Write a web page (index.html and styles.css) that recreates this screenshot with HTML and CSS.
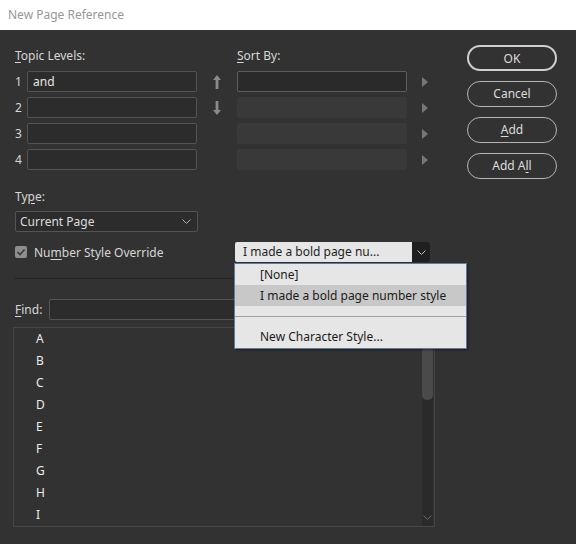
FILE: index.html
```html
<!DOCTYPE html>
<html>
<head>
<meta charset="utf-8">
<link rel="stylesheet" href="styles.css">
</head>
<body>
<div class="titlebar">New Page Reference</div>
<div class="content">
  <div class="left">
    <div class="levels">
      <div class="hdr span2"><u>T</u>opic Levels:</div>
      <div class="hdr col4"><u>S</u>ort By:</div>

      <div class="num">1</div>
      <div class="field"><span class="ftext">and</span></div>
      <div class="arrow"><svg width="8" height="14" viewBox="0 0 8 14"><polygon points="0,5 4,0 8,5" fill="#8a8a8a"/><rect x="2.6" y="4" width="2.8" height="10" fill="#8a8a8a"/></svg></div>
      <div class="field active"></div>
      <div class="tri-cell"><span class="tri"></span></div>

      <div class="num">2</div>
      <div class="field"></div>
      <div class="arrow"><svg width="8" height="14" viewBox="0 0 8 14"><polygon points="0,9 4,14 8,9" fill="#8a8a8a"/><rect x="2.6" y="0" width="2.8" height="10" fill="#8a8a8a"/></svg></div>
      <div class="field disabled"></div>
      <div class="tri-cell"><span class="tri"></span></div>

      <div class="num">3</div>
      <div class="field"></div>
      <div class="arrow"></div>
      <div class="field disabled"></div>
      <div class="tri-cell"><span class="tri"></span></div>

      <div class="num">4</div>
      <div class="field"></div>
      <div class="arrow"></div>
      <div class="field disabled"></div>
      <div class="tri-cell"><span class="tri"></span></div>
    </div>

    <div class="type-label">Ty<u>p</u>e:</div>
    <div class="type-select">
      <span>Current Page</span>
      <svg class="chev" width="9" height="5" viewBox="0 0 9 5"><polyline points="0.5,0.5 4.5,4.5 8.5,0.5" fill="none" stroke="#b0b0b0" stroke-width="1"/></svg>
    </div>

    <div class="check-row">
      <span class="checkbox"><svg width="12" height="12" viewBox="0 0 12 12"><polyline points="2.5,6 5,8.5 9.5,3.5" fill="none" stroke="#3a3a3a" stroke-width="1.6"/></svg></span>
      <span class="check-label">Nu<u>m</u>ber Style Override</span>
      <div class="style-select">
        <div class="ss-value">I made a bold page nu...</div>
        <div class="ss-btn"><svg width="9" height="5" viewBox="0 0 9 5"><polyline points="0.5,0.5 4.5,4.5 8.5,0.5" fill="none" stroke="#bdbdbd" stroke-width="1"/></svg></div>
        <div class="popup">
          <div class="pitem">[None]</div>
          <div class="pitem hl">I made a bold page number style</div>
          <div class="pblank"></div>
          <div class="psep"></div>
          <div class="pitem">New Character Style...</div>
        </div>
      </div>
    </div>

    <div class="divider"></div>

    <div class="find-row">
      <span class="find-label"><u>F</u>ind:</span>
      <div class="find-field"></div>
    </div>

    <div class="list">
      <div class="items">
        <div class="item">A</div>
        <div class="item">B</div>
        <div class="item">C</div>
        <div class="item">D</div>
        <div class="item">E</div>
        <div class="item">F</div>
        <div class="item">G</div>
        <div class="item">H</div>
        <div class="item">I</div>
      </div>
      <div class="scrollbar">
        <div class="thumb"></div>
        <svg class="sb-chev" width="9" height="5" viewBox="0 0 9 5"><polyline points="0.5,0.5 4.5,4.5 8.5,0.5" fill="none" stroke="#6a6a6a" stroke-width="1"/></svg>
      </div>
    </div>
  </div>

  <div class="buttons">
    <div class="btn ok">OK</div>
    <div class="btn">Cancel</div>
    <div class="btn"><u>A</u>dd</div>
    <div class="btn">Add A<u>l</u>l</div>
  </div>
</div>
</body>
</html>
```

FILE: styles.css
```css
* { box-sizing: border-box; }
html, body { margin: 0; padding: 0; }
body {
  width: 576px;
  height: 544px;
  background: #323232;
  font-family: "Noto Sans", "Open Sans", sans-serif;
  font-size: 12px;
  color: #d6d6d6;
  overflow: hidden;
}
u { text-decoration: underline; text-underline-offset: 2px; }

.titlebar {
  height: 30px;
  background: #ffffff;
  color: #979797;
  line-height: 30px;
  padding-left: 8px;
}

.content {
  display: flex;
  padding-top: 15px;
}

.left {
  width: 420px;
  margin-left: 15px;
}

.levels {
  display: grid;
  grid-template-columns: 12px 170px 40px 170px 28px;
  grid-template-rows: repeat(5, 21px);
  row-gap: 5px;
}
.hdr { line-height: 22px; }
.span2 { grid-column: 1 / 3; }
.col4 { grid-column: 4 / 5; }
.num { grid-column: 1; line-height: 21px; }
.field {
  height: 21px;
  background: #2c2c2c;
  border: 1px solid #535353;
  border-radius: 2px;
  padding-left: 5px;
  line-height: 19px;
  color: #e6e6e6;
}
.field.active { background: #2a2a2a; border-color: #5c5c5c; }
.field.disabled { background: #393939; border-color: #393939; }
.arrow {
  display: flex;
  align-items: center;
  justify-content: center;
  padding-right: 1px;
}
.arrow svg { display: block; }
.tri-cell {
  display: flex;
  align-items: center;
  padding-left: 15px;
}
.tri {
  width: 0; height: 0;
  border-left: 6px solid #777777;
  border-top: 5px solid transparent;
  border-bottom: 5px solid transparent;
}

.type-label {
  margin-top: 18px;
  line-height: 18px;
}
.type-select {
  margin-top: 5px;
  width: 183px;
  height: 21px;
  background: #2c2c2c;
  border: 1px solid #545454;
  border-radius: 2px;
  display: flex;
  align-items: center;
  justify-content: space-between;
  padding: 0 6px 0 4px;
  color: #dcdcdc;
}
.chev { display: block; }

.check-row {
  margin-top: 10px;
  height: 20px;
  display: flex;
  align-items: center;
}
.checkbox {
  width: 12px; height: 12px;
  background: #8e8e8e;
  border-radius: 2px;
  display: block;
}
.checkbox svg { display: block; }
.check-label { margin-left: 7px; }

.style-select {
  position: relative;
  margin-left: auto;
  margin-right: 5px;
  width: 195px;
  height: 20px;
  display: flex;
}
.ss-value {
  flex: 1;
  background: #e6e6e6;
  color: #1e1e1e;
  line-height: 20px;
  padding-left: 8px;
  border-radius: 2px 0 0 2px;
}
.ss-btn {
  width: 18px;
  background: #1f1f1f;
  border-radius: 0 3px 3px 0;
  display: flex;
  align-items: center;
  justify-content: center;
}
.ss-btn svg { display: block; }

.popup {
  position: absolute;
  left: -1px;
  top: 21px;
  width: 233px;
  height: 86px;
  background: #e6e6e6;
  border: 1px solid #5b7ca3;
  box-shadow: 1px 1px 2px rgba(0,0,0,0.45);
  color: #1c1c1c;
  padding-top: 1px;
  z-index: 5;
}
.pitem {
  height: 20px;
  line-height: 20px;
  padding-left: 25px;
}
.pitem.hl { background: #c8c8c8; height: 21px; line-height: 21px; }
.pblank { height: 10px; }
.psep { height: 1px; background: #a0a0a0; margin: 0 0 10px 0; }

.divider {
  margin-top: 16px;
  margin-left: -1px;
  height: 1px;
  background: #262626;
}

.find-row {
  margin-top: 20px;
  display: flex;
  align-items: center;
  height: 21px;
}
.find-label { width: 34px; }
.find-field {
  flex: 1;
  height: 21px;
  background: #2c2c2c;
  border: 1px solid #545454;
  border-radius: 2px;
}

.list {
  margin-top: 7px;
  margin-left: -2px;
  width: 422px;
  height: 200px;
  border: 1px solid #464646;
  display: flex;
}
.items {
  flex: 1;
  padding-top: 0;
  padding-left: 22px;
}
.item {
  height: 22px;
  line-height: 22px;
  color: #ececec;
}
.scrollbar {
  width: 11px;
  margin-right: 1px;
  background: #2a2a2a;
  position: relative;
}
.thumb {
  height: 72px;
  background: #4a4a4a;
  border-radius: 0 0 5px 5px;
}
.sb-chev {
  position: absolute;
  left: 1px;
  bottom: 6px;
}

.buttons {
  margin-left: 32px;
  display: flex;
  flex-direction: column;
  gap: 10px;
}
.btn {
  width: 90px;
  height: 26px;
  border: 1.5px solid #b5b5b5;
  border-radius: 13px;
  text-align: center;
  line-height: 24px;
  color: #dcdcdc;
}
.btn.ok { border: 2px solid #cfcfcf; line-height: 23px; }
```
